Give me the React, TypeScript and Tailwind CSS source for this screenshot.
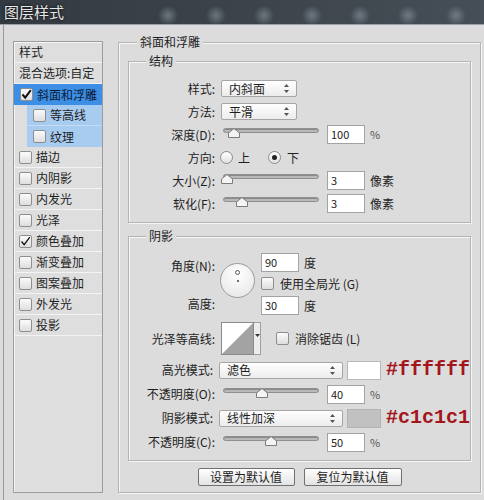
import React from "react";

const font = "font-['Noto_Sans_CJK_SC','Noto_Sans',sans-serif]";

const effects = [
  { name: "描边", checked: false },
  { name: "内阴影", checked: false },
  { name: "内发光", checked: false },
  { name: "光泽", checked: false },
  { name: "颜色叠加", checked: true },
  { name: "渐变叠加", checked: false },
  { name: "图案叠加", checked: false },
  { name: "外发光", checked: false },
  { name: "投影", checked: false },
];

const Check = ({ checked = false, bold = false }: { checked?: boolean; bold?: boolean }) => (
  <div className="w-[13px] h-[13px] shrink-0 rounded-[2px] border border-[#8e8e8e] bg-gradient-to-b from-[#fbfbfb] to-[#dedede] flex items-center justify-center">
    {checked && (
      <svg width="11" height="11" viewBox="0 0 11 11">
        <path
          d="M1.5 5.5 L4.2 8.6 L9.8 1.2"
          fill="none"
          stroke="#111"
          strokeWidth={bold ? 2 : 1.3}
        />
      </svg>
    )}
  </div>
);

const Radio = ({ checked = false }: { checked?: boolean }) => (
  <div className="w-[13px] h-[13px] rounded-full border border-[#8a8a8a] bg-gradient-to-b from-white to-[#e2e2e2] flex items-center justify-center">
    {checked && <div className="w-[5px] h-[5px] rounded-full bg-[#222]" />}
  </div>
);

const Arrows = () => (
  <svg width="5" height="9" viewBox="0 0 5 9">
    <path d="M2.5 0 L5 3 L0 3 Z M0 6 L5 6 L2.5 9 Z" fill="#555" />
  </svg>
);

const Select = ({ value, w }: { value: string; w: string }) => (
  <div
    className={`${w} h-[17px] rounded-[2px] border border-[#a6a6a6] bg-gradient-to-b from-white to-[#ececec] flex items-center justify-between pl-[7px] pr-[7px]`}
  >
    <span className="leading-none">{value}</span>
    <Arrows />
  </div>
);

const Field = ({ value }: { value: string }) => (
  <div className="w-[38px] h-[19px] border border-[#a3a3a3] bg-white pl-[3px] text-[11px] leading-[17px] text-[#222]">
    {value}
  </div>
);

const Slider = ({ pos }: { pos: number }) => (
  <div className="relative w-[100px] h-[19px]">
    <div className="mx-[2px] mt-[3px] h-[5px] rounded-full border border-[#8f8f8f] bg-[#b9b9b9] shadow-[inset_0_1px_0_#8a8a8a]" />
    <svg
      className="absolute top-[3px]"
      style={{ left: pos - 6 }}
      width="12"
      height="10"
      viewBox="0 0 12 10"
    >
      <path d="M6 0.5 L11.5 5 L11.5 9.5 L0.5 9.5 L0.5 5 Z" fill="#f4f4f4" stroke="#7c7c7c" strokeLinejoin="round" />
    </svg>
  </div>
);

const Row = ({ label, h = "h-[23px]", children }: { label: string; h?: string; children: React.ReactNode }) => (
  <div className={`flex items-center ${h}`}>
    <div className="w-[87px] text-right pr-[1px] text-[#1e1e1e] leading-none">{label}</div>
    <div className="ml-[5px] flex items-center">{children}</div>
  </div>
);

const Legend = ({ text, ml }: { text: string; ml: string }) => (
  <div className={`-mt-[9px] ${ml} w-fit px-[3px] h-[16px] leading-[16px] bg-[#dcdcdc] text-[#1e1e1e]`}>
    {text}
  </div>
);

const SliderRow = ({ label, pos, value, unit }: { label: string; pos: number; value: string; unit: string }) => (
  <Row label={label}>
    <Slider pos={pos} />
    <div className="ml-[6px]">
      <Field value={value} />
    </div>
    <span className={`ml-[5px] ${unit === "%" ? "text-[11px] text-[#555]" : ""}`}>{unit}</span>
  </Row>
);

export default function App() {
  return (
    <div className={`w-[484px] h-[500px] overflow-hidden bg-[#dcdcdc] text-[12px] text-[#1e1e1e] ${font}`}>
      {/* title bar */}
      <div className="h-[25px] flex bg-gradient-to-r from-[#343a41] via-[#3c434b] to-[#464e57] border-b border-[#9aa1a8]">
        <div className="pl-[4px] pt-[3px] text-[15px] leading-[17px] text-[#e4e6e8] [text-shadow:0_0_3px_#000]">
          图层样式
        </div>
        <div className="flex-1 ml-[80px] bg-[radial-gradient(circle_at_50%_62%,rgba(150,160,170,0.55)_0,transparent_10px)] bg-[length:48px_25px] bg-repeat-x" />
      </div>

      <div className="flex h-[475px] ml-[3px] border-l border-[#9a9a9a] pl-[9px] pt-[16px]">
        {/* left list */}
        <div className="w-[90px] h-[452px] border border-[#9c9c9c] bg-[#dedede] shadow-[inset_1px_1px_0_#f4f4f4]">
          <div className="h-[21px] pl-[5px] flex items-center border-b border-[#f3f3f3]">样式</div>
          <div className="h-[21px] pl-[5px] flex items-center border-b border-[#f3f3f3]">混合选项:自定</div>
          <div className="h-[21px] pl-[6px] flex items-center gap-[4px] bg-[#3d8fe6] text-[#0c1a33]">
            <Check checked bold />
            <span>斜面和浮雕</span>
          </div>
          <div className="h-[21px] ml-[13px] pl-[6px] flex items-center gap-[4px] bg-[#a8ccf0] border-b border-[#c4dcf4]">
            <Check />
            <span>等高线</span>
          </div>
          <div className="h-[21px] ml-[13px] pl-[6px] flex items-center gap-[4px] bg-[#a8ccf0]">
            <Check />
            <span>纹理</span>
          </div>
          {effects.map((e) => (
            <div key={e.name} className="h-[21px] pl-[5px] flex items-center gap-[4px] border-b border-[#f3f3f3]">
              <Check checked={e.checked} />
              <span>{e.name}</span>
            </div>
          ))}
        </div>

        {/* right group */}
        <div className="ml-[15px] mt-[1px] w-[363px] h-[451px] border border-[#b4b4b4] shadow-[inset_1px_1px_0_#f6f6f6,1px_1px_0_#f6f6f6]">
          <Legend text="斜面和浮雕" ml="ml-[18px]" />
          <div className="px-[9px]">
            {/* structure */}
            <div className="mt-[11px] h-[162px] border border-[#b4b4b4] shadow-[inset_1px_1px_0_#f6f6f6,1px_1px_0_#f6f6f6]">
              <Legend text="结构" ml="ml-[17px]" />
              <div className="mt-[8px]">
                <Row label="样式:">
                  <Select value="内斜面" w="w-[76px]" />
                </Row>
                <Row label="方法:">
                  <Select value="平滑" w="w-[76px]" />
                </Row>
                <SliderRow label="深度(D):" pos={13} value="100" unit="%" />
                <Row label="方向:">
                  <div className="-ml-[1px] flex items-center">
                    <Radio />
                    <span className="ml-[5px]">上</span>
                    <div className="ml-[18px]">
                      <Radio checked />
                    </div>
                    <span className="ml-[6px]">下</span>
                  </div>
                </Row>
                <SliderRow label="大小(Z):" pos={6} value="3" unit="像素" />
                <SliderRow label="软化(F):" pos={21} value="3" unit="像素" />
              </div>
            </div>

            {/* shadow */}
            <div className="mt-[13px] h-[225px] border border-[#b4b4b4] shadow-[inset_1px_1px_0_#f6f6f6,1px_1px_0_#f6f6f6]">
              <Legend text="阴影" ml="ml-[17px]" />
              <div className="mt-[9px] flex h-[62px]">
                <div className="w-[87px] text-right pr-[1px]">
                  <div className="mt-[5px] h-[16px] leading-[16px]">角度(N):</div>
                  <div className="mt-[22px] h-[16px] leading-[16px]">高度:</div>
                </div>
                <div className="ml-[4px] mt-[10px] w-[35px] h-[35px] rounded-full border border-[#9a9a9a] bg-[radial-gradient(circle_at_50%_30%,#ffffff,#e4e4e4)] flex flex-col items-center">
                  <div className="mt-[6px] w-[5px] h-[5px] rounded-full border border-[#555] bg-white" />
                  <div className="mt-[5px] w-[2px] h-[2px] rounded-full bg-[#444]" />
                </div>
                <div className="ml-[6px] flex flex-col">
                  <div className="flex items-center">
                    <Field value="90" />
                    <span className="ml-[5px]">度</span>
                  </div>
                  <div className="mt-[2px] h-[19px] flex items-center">
                    <Check />
                    <span className="ml-[6px]">使用全局光 (G)</span>
                  </div>
                  <div className="mt-[3px] flex items-center">
                    <Field value="30" />
                    <span className="ml-[5px]">度</span>
                  </div>
                </div>
              </div>

              <div className="mt-[7px] flex items-center h-[33px]">
                <div className="w-[87px] text-right pr-[1px] leading-none">光泽等高线:</div>
                <div className="ml-[5px] flex h-[33px]">
                  <div className="w-[33px] h-[33px] border border-[#8a8a8a] bg-white">
                    <svg width="31" height="31" viewBox="0 0 31 31">
                      <path d="M0 31 L31 0 L31 31 Z" fill="#a3a3a3" />
                    </svg>
                  </div>
                  <div className="w-[7px] h-[33px] border border-l-0 border-[#a0a0a0] bg-[#ececec] flex justify-center">
                    <svg className="mt-[11px]" width="5" height="3" viewBox="0 0 5 3">
                      <path d="M0 0 L5 0 L2.5 3 Z" fill="#333" />
                    </svg>
                  </div>
                </div>
                <div className="ml-[15px] flex items-center">
                  <Check />
                  <span className="ml-[6px]">消除锯齿 (L)</span>
                </div>
              </div>

              <div className="mt-[3px]">
                <Row label="高光模式:" h="h-[24px]">
                  <Select value="滤色" w="w-[124px]" />
                  <div className="ml-[4px] w-[34px] h-[19px] border border-[#b9b9b9] bg-white" />
                  <span className="ml-[5px] font-['Liberation_Mono',monospace] font-bold text-[20px] leading-none text-[#a3161c]">
                    #ffffff
                  </span>
                </Row>
                <Row label="不透明度(O):" h="h-[24px]">
                  <Slider pos={41} />
                  <div className="ml-[6px]">
                    <Field value="40" />
                  </div>
                  <span className="ml-[5px] text-[11px] text-[#555]">%</span>
                </Row>
                <Row label="阴影模式:" h="h-[24px]">
                  <Select value="线性加深" w="w-[124px]" />
                  <div className="ml-[4px] w-[34px] h-[19px] border border-[#b3b3b3] bg-[#c1c1c1]" />
                  <span className="ml-[5px] font-['Liberation_Mono',monospace] font-bold text-[20px] leading-none text-[#a3161c]">
                    #c1c1c1
                  </span>
                </Row>
                <Row label="不透明度(C):" h="h-[24px]">
                  <Slider pos={50} />
                  <div className="ml-[6px]">
                    <Field value="50" />
                  </div>
                  <span className="ml-[5px] text-[11px] text-[#555]">%</span>
                </Row>
              </div>
            </div>

            <div className="mt-[7px] flex justify-center gap-[9px]">
              <div className="w-[97px] h-[18px] border border-[#707070] rounded-[2px] bg-gradient-to-b from-white to-[#e3e3e3] flex items-center justify-center">
                设置为默认值
              </div>
              <div className="w-[98px] h-[18px] border border-[#707070] rounded-[2px] bg-gradient-to-b from-white to-[#e3e3e3] flex items-center justify-center">
                复位为默认值
              </div>
            </div>
          </div>
        </div>
      </div>
    </div>
  );
}
